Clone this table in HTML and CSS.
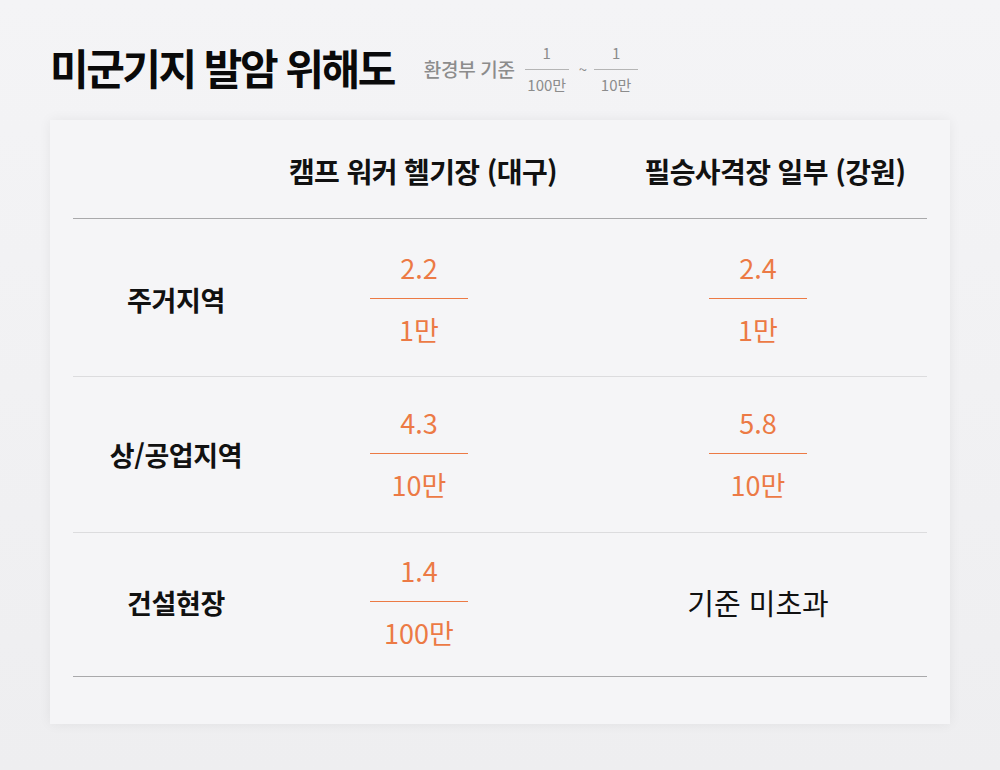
FILE: index.html
```html
<!DOCTYPE html>
<html lang="ko">
<head>
<meta charset="utf-8">
<link rel="stylesheet" href="styles.css">
</head>
<body>
<div class="page">
  <div class="head">
    <h1 class="title">미군기지 발암 위해도</h1>
    <div class="sub">
      <span class="sub-label">환경부 기준</span>
      <span class="mini-frac"><span class="mf-num">1</span><span class="mf-line"></span><span class="mf-den">100만</span></span>
      <span class="tilde">~</span>
      <span class="mini-frac"><span class="mf-num">1</span><span class="mf-line"></span><span class="mf-den">10만</span></span>
    </div>
  </div>
  <div class="card">
    <div class="row row-head">
      <div class="cell"></div>
      <div class="cell c2 hd">캠프 워커 헬기장 (대구)</div>
      <div class="cell c3 hd hd3">필승사격장 일부 (강원)</div>
    </div>
    <div class="row row-1">
      <div class="cell label">주거지역</div>
      <div class="cell c2"><div class="frac"><span class="num">2.2</span><span class="bar"></span><span class="den">1만</span></div></div>
      <div class="cell c3 v3"><div class="frac"><span class="num">2.4</span><span class="bar"></span><span class="den">1만</span></div></div>
    </div>
    <div class="row row-2">
      <div class="cell label">상/공업지역</div>
      <div class="cell c2"><div class="frac"><span class="num">4.3</span><span class="bar"></span><span class="den">10만</span></div></div>
      <div class="cell c3 v3"><div class="frac"><span class="num">5.8</span><span class="bar"></span><span class="den">10만</span></div></div>
    </div>
    <div class="row row-3">
      <div class="cell label">건설현장</div>
      <div class="cell c2"><div class="frac"><span class="num">1.4</span><span class="bar"></span><span class="den">100만</span></div></div>
      <div class="cell c3 v3"><span class="plain">기준 미초과</span></div>
    </div>
  </div>
</div>
</body>
</html>
```

FILE: styles.css
```css
html, body {
  margin: 0;
  padding: 0;
}
body {
  width: 1000px;
  height: 770px;
  background: linear-gradient(180deg, #f4f4f6 0%, #eeeef0 100%);
  font-family: "Noto Sans CJK KR", "Noto Sans", sans-serif;
  color: #111;
  overflow: hidden;
}
.page {
  padding: 32px 50px 0;
}
.head {
  display: flex;
  align-items: center;
  height: 70px;
}
.title {
  margin: 0;
  font-size: 42px;
  font-weight: 700;
  letter-spacing: -2.5px;
  line-height: 1;
  color: #0a0a0a;
}
.sub {
  display: flex;
  align-items: center;
  margin-left: 30px;
  color: #8c8c8c;
  padding-top: 2px;
}
.sub-label {
  font-size: 19px;
  font-weight: 500;
  letter-spacing: -0.3px;
  margin-right: 10px;
}
.mini-frac {
  display: inline-flex;
  flex-direction: column;
  align-items: center;
  width: 44px;
  font-size: 15px;
  line-height: 17px;
  color: #8c8c8c;
}
.mf-num {
  margin-bottom: 8px;
}
.mf-line {
  display: block;
  width: 44px;
  height: 1px;
  background: #b5b5b5;
}
.mf-den {
  margin-top: 6px;
}
.tilde {
  font-size: 15px;
  margin: 0 7px 0 10px;
  color: #8c8c8c;
}
.card {
  margin-top: 18px;
  width: 900px;
  box-sizing: border-box;
  height: 604px;
  background: #f5f5f7;
  box-shadow: 0 0 12px rgba(0, 0, 0, 0.06);
  padding: 0 23px;
}
.row {
  display: grid;
  grid-template-columns: 206px 280px 1fr;
  align-items: center;
  border-bottom: 1px solid #dcdcde;
}
.row-head {
  height: 98px;
  border-bottom: 1px solid #a9a9ab;
}
.row-1 { padding: 31px 0 28px; }
.row-2 { padding: 28px 0 29px; }
.row-3 { padding: 20px 0 25px; border-bottom: 1px solid #a9a9ab; }
.cell {
  display: flex;
  justify-content: center;
}
.v3 {
  padding-left: 30px;
}
.hd {
  font-size: 28px;
  font-weight: 700;
  letter-spacing: -0.6px;
  padding-top: 4px;
}
.c2.hd {
  padding-left: 8px;
}
.hd3 {
  padding-left: 64px;
}
.label {
  font-size: 27px;
  font-weight: 700;
  letter-spacing: -0.4px;
}
.frac {
  display: flex;
  flex-direction: column;
  align-items: center;
  width: 98px;
  color: #ec7a45;
  font-size: 27px;
  font-weight: 400;
  line-height: 36px;
}
.num {
  margin-bottom: 12px;
}
.bar {
  display: block;
  width: 98px;
  height: 1px;
  background: #ec7a45;
}
.den {
  margin-top: 13px;
}
.plain {
  font-size: 29px;
  font-weight: 400;
  color: #111;
}
```
